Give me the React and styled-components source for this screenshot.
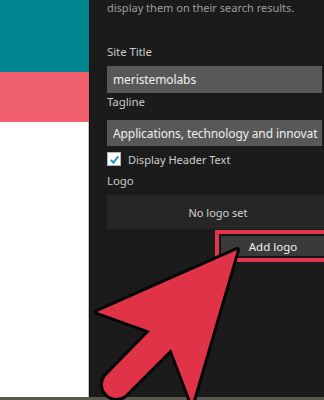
import styled, { createGlobalStyle } from 'styled-components';

const GlobalStyle = createGlobalStyle`
  html, body {
    margin: 0;
    padding: 0;
    background: #1b1b1b;
  }
  body {
    font-family: "Noto Sans", "Open Sans", sans-serif;
  }
`;

const Frame = styled.div`
  width: 324px;
  height: 400px;
  display: flex;
  flex-direction: column;
  overflow: hidden;
  position: relative;
`;

const Main = styled.div`
  flex: 1;
  display: flex;
  min-height: 0;
`;

const Preview = styled.div`
  width: 89px;
  display: flex;
  flex-direction: column;
`;

const Band = styled.div`
  height: ${({ h }) => h}px;
  background: ${({ color }) => color};
`;

const Page = styled.div`
  flex: 1;
  background: #ffffff;
  border-right: 1px solid #c4c4c4;
`;

const Panel = styled.div`
  flex: 1;
  background: #1b1b1b;
  border-left: 1px solid #0f0f0f;
  padding-left: 17px;
  overflow: hidden;
`;

const Fields = styled.div`
  width: 234px;
  display: flex;
  flex-direction: column;
`;

const Desc = styled.p`
  margin: 0;
  font-size: 11px;
  line-height: 16px;
  color: #9e9e9e;
  white-space: nowrap;
`;

const Label = styled.div`
  margin-top: ${({ top }) => top}px;
  font-size: 11.5px;
  letter-spacing: -0.1px;
  line-height: 18px;
  color: #c9c9c9;
`;

const Input = styled.div`
  margin-top: ${({ top }) => top}px;
  width: 215px;
  height: ${({ h }) => h}px;
  box-sizing: border-box;
  background: #585858;
  padding: 0 6px;
  display: flex;
  align-items: center;
  font-size: 12px;
  letter-spacing: -0.1px;
  color: #efefef;
  white-space: nowrap;
  overflow: hidden;
`;

const CheckRow = styled.label`
  margin-top: 6px;
  height: 14px;
  display: flex;
  align-items: center;
  gap: 7px;
  font-size: 11px;
  color: #cfcfcf;
`;

const Box = styled.span`
  width: 14px;
  height: 14px;
  box-sizing: border-box;
  background: #ffffff;
  border: 1px solid #b5b5b5;
  display: flex;
  align-items: center;
  justify-content: center;
`;

const LogoEmpty = styled.div`
  margin-top: 5px;
  height: 34px;
  background: #262626;
  display: flex;
  align-items: center;
  justify-content: center;
  padding-right: 12px;
  font-size: 11px;
  color: #d2d2d2;
`;

const ButtonRow = styled.div`
  margin-top: 1px;
  display: flex;
  justify-content: flex-end;
`;

const Highlight = styled.div`
  width: 126px;
  height: 32px;
  box-sizing: border-box;
  border: 4px solid #e0354b;
  background: #1b1b1b;
  padding: 1px 0 1px 1px;
  display: flex;
`;

const AddButton = styled.button`
  flex: 1;
  border: 1px solid #111;
  background: #3a3a3a;
  color: #f2f2f2;
  font-family: inherit;
  font-size: 11.5px;
  padding: 0 11px 0 0;
  cursor: pointer;
`;

const Footer = styled.div`
  height: 3px;
  background: #555950;
`;

const Arrow = styled.svg`
  position: absolute;
  left: 0;
  top: 0;
  pointer-events: none;
`;

export default function App() {
  return (
    <>
      <GlobalStyle />
      <Frame>
        <Main>
          <Preview>
            <Band h={72} color="#00858f" />
            <Band h={50} color="#f1606f" />
            <Page />
          </Preview>
          <Panel>
            <Fields>
              <Desc>display them on their search results.</Desc>
              <Label top={27}>Site Title</Label>
              <Input top={5} h={27}>meristemolabs</Input>
              <Label top={0}>Tagline</Label>
              <Input top={9} h={26}>Applications, technology and innovat</Input>
              <CheckRow>
                <Box>
                  <svg width="11" height="11" viewBox="0 0 12 12">
                    <path d="M2 6.5 L4.8 9.3 L10.2 2.6" fill="none" stroke="#1e8cbe" strokeWidth="2" />
                  </svg>
                </Box>
                Display Header Text
              </CheckRow>
              <Label top={6}>Logo</Label>
              <LogoEmpty>No logo set</LogoEmpty>
              <ButtonRow>
                <Highlight>
                  <AddButton>Add logo</AddButton>
                </Highlight>
              </ButtonRow>
            </Fields>
          </Panel>
        </Main>
        <Footer />
        <Arrow width="324" height="400" viewBox="0 0 324 400">
          <path
            d="M237 250 L97 312 L150 331 L106 376 A13.5 13.5 0 0 0 125 395 L171 349 L192 404 Z"
            fill="#e13348"
            stroke="#050505"
            strokeWidth="6"
            strokeLinejoin="round"
            paintOrder="stroke"
          />
        </Arrow>
      </Frame>
    </>
  );
}
